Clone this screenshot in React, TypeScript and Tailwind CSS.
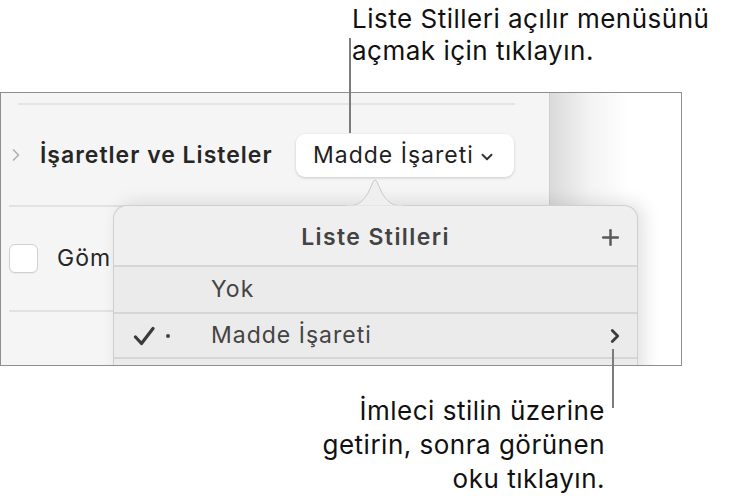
import { ChevronDown, ChevronRight, Plus } from 'lucide-react';

function Check() {
  return (
    <svg width="22" height="20" viewBox="0 0 22 20" className="text-[#3a3a3a]">
      <path d="M2.5 11 L8.5 17.5 L20 2.5" fill="none" stroke="currentColor" strokeWidth="3.2" strokeLinecap="round" strokeLinejoin="round" />
    </svg>
  );
}

function Arrow() {
  return (
    <svg width="56" height="28" viewBox="0 0 56 28" className="absolute left-[233px] top-[-27px]">
      <path d="M0 27 C12 27 16 22 21 14 L26 3 C27 0.5 29 0.5 30 3 L35 14 C40 22 44 27 56 27 Z" fill="#efefef" stroke="#c9c9c9" strokeWidth="1" />
      <rect x="0" y="26.5" width="56" height="2" fill="#efefef" />
    </svg>
  );
}

function Popover() {
  return (
    <div className="absolute left-[112px] top-[112px] w-[525px] h-[180px] bg-[#ebebeb] rounded-t-[14px] border-t border-r border-l border-[#cfcfcf] shadow-[6px_-2px_18px_rgba(0,0,0,0.12)]">
      <Arrow />
      <div className="h-[59px] flex items-center justify-center relative pt-[4px] rounded-t-[14px] bg-[#efefef]">
        <span className="text-[23px] font-semibold text-[#434343] tracking-[1.4px]">Liste Stilleri</span>
        <Plus className="absolute right-[14px] top-[19px] w-[25px] h-[25px] text-[#5a5a5a]" strokeWidth={2.4} />
      </div>
      <div className="h-[2px] bg-[#d6d6d6]" />
      <div className="h-[45px] flex items-center pl-[97px] text-[23px] tracking-[1px] text-[#444]">Yok</div>
      <div className="h-[2px] bg-[#d6d6d6]" />
      <div className="h-[43px] flex items-center text-[23px] tracking-[1px] text-[#444] relative">
        <div className="w-[97px] flex items-center pl-[19px] gap-[11px]">
          <Check />
          <span className="w-[4px] h-[4px] rounded-full bg-[#444]" />
        </div>
        <span>Madde İşareti</span>
        <ChevronRight className="absolute right-[11px] top-[11px] w-[22px] h-[22px] text-[#3c3c3c]" strokeWidth={3} />
      </div>
      <div className="h-[2px] bg-[#d6d6d6]" />
    </div>
  );
}

export default function App() {
  return (
    <div className="relative w-[739px] h-[503px] bg-white overflow-hidden font-['Inter','Noto_Sans',sans-serif] text-[#1a1a1a]">
      <div className="h-[92px] pl-[352px] pt-[3px] text-[26px] leading-[32px] tracking-[0.5px] text-[#111]">
        <div>Liste Stilleri açılır menüsünü</div>
        <div>açmak için tıklayın.</div>
      </div>

      <div className="relative w-[682px] h-[274px] border border-[#8e8e8e] flex overflow-hidden">
        <div className="w-[548px] bg-[#f5f5f5] flex flex-col">
          <div className="h-[10px]" />
          <div className="ml-[17px] w-[497px] h-[2px] bg-[#e4e4e4]" />
          <div className="h-[100px] flex items-center">
            <ChevronRight className="ml-[5px] w-[20px] h-[20px] text-[#b0b0b0]" strokeWidth={2} />
            <span className="ml-[14px] w-[256px] text-[23px] tracking-[1px] font-semibold text-[#262626]">İşaretler ve Listeler</span>
            <div className="h-[43px] w-[218px] bg-white rounded-[9px] shadow-[0_1px_3px_rgba(0,0,0,0.18)] flex items-center pl-[17px] gap-[4px] text-[23px] tracking-[1px] text-[#1f1f1f]">
              <span>Madde İşareti</span>
              <ChevronDown className="w-[18px] h-[18px] mt-[3px] text-[#333]" strokeWidth={2.6} />
            </div>
          </div>
          <div className="ml-[8px] h-[2px] bg-[#e2e2e2]" />
          <div className="h-[103px] flex items-center">
            <div className="ml-[8px] w-[29px] h-[29px] bg-white border border-[#d0d0d0] rounded-[6px] shadow-[0_1px_1px_rgba(0,0,0,0.05)]" />
            <span className="ml-[19px] text-[23px] tracking-[1px] text-[#262626]">Göm</span>
          </div>
          <div className="ml-[8px] h-[2px] bg-[#e2e2e2]" />
        </div>
        <div className="flex-1 border-l border-[#cfcfcf] bg-[linear-gradient(to_right,#dadada,#f3f3f3_30%,#ffffff_60%)]" />
        <Popover />
      </div>

      <div className="pr-[134px] pt-[28px] text-right text-[26px] leading-[34px] tracking-[0.5px] text-[#111]">
        <div>İmleci stilin üzerine</div>
        <div>getirin, sonra görünen</div>
        <div>oku tıklayın.</div>
      </div>

      <div className="absolute left-[349px] top-[38px] w-[2px] h-[95px] bg-[#7c7c7c]" />
      <div className="absolute left-[612px] top-[349px] w-[2px] h-[59px] bg-[#7c7c7c]" />
    </div>
  );
}
